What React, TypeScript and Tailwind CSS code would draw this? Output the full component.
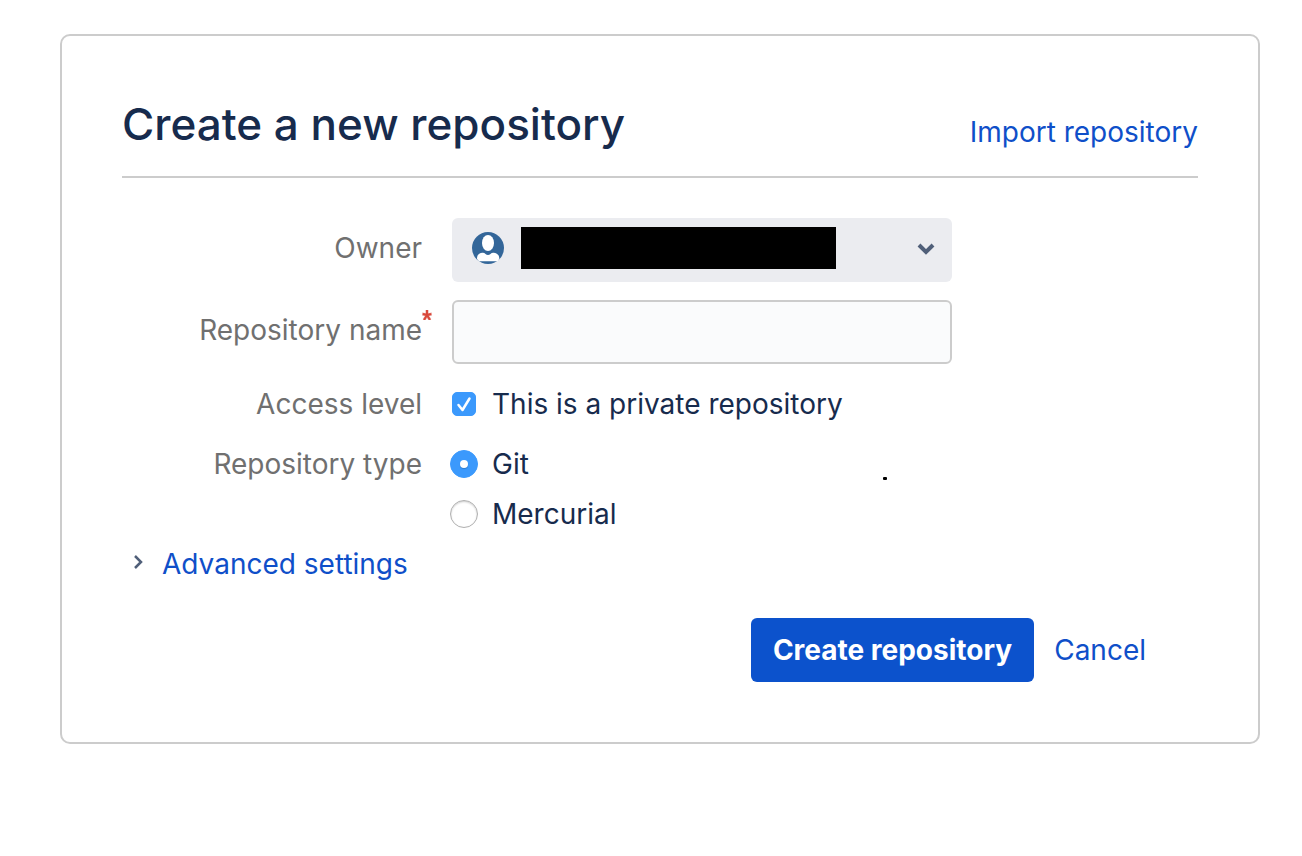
import React, { useState } from "react";

type RepositoryType = "git" | "hg";

const REPOSITORY_TYPES: { value: RepositoryType; label: string }[] = [
  { value: "git", label: "Git" },
  { value: "hg", label: "Mercurial" },
];

const rowClass = "grid grid-cols-[300px_minmax(0,500px)] gap-x-[30px]";
const labelClass = "text-right text-[#707070]";
const linkClass = "text-[#0f4fc9] hover:underline";

const OwnerSelect: React.FC = () => (
  <div className="relative h-16">
    <select
      id="owner"
      className="h-full w-full appearance-none rounded-md bg-[#ebecf0]"
    >
      <option value="me" aria-label="Current user" />
    </select>
    <div className="pointer-events-none absolute inset-0 flex items-center pr-4 pb-1 pl-5">
      <svg viewBox="0 0 32 32" className="h-8 w-8 shrink-0">
        <circle cx="16" cy="16" r="16" fill="#336699" />
        <ellipse cx="16" cy="11" rx="6" ry="8" fill="#fff" />
        <path
          d="M5 27C5 22.500 7 21 10.500 20.700C13 20.500 14 23 16 23C18 23 19 20.500 21.500 20.700C25 21 27.300 22.500 27.300 27L25.500 29.200H7Z"
          fill="#fff"
        />
      </svg>
      <div className="ml-[17px] h-[42px] w-[315px] bg-black" />
      <svg viewBox="0 0 20 20" className="ml-auto h-5 w-5 shrink-0">
        <path
          d="M3 7L10 14L17 7"
          fill="none"
          stroke="#505f79"
          strokeWidth="4"
        />
      </svg>
    </div>
  </div>
);

const App: React.FC = () => {
  const [name, setName] = useState("");
  const [isPrivate, setIsPrivate] = useState(true);
  const [type, setType] = useState<RepositoryType>("git");

  return (
    <main className="min-h-screen bg-white pt-[34px] pr-[42px] pb-10 pl-[60px] font-['Inter',sans-serif] text-[28px] leading-10 text-[#172b4d]">
      <form
        className="rounded-[10px] border-2 border-[#cccccc] p-[60px]"
        onSubmit={(e) => e.preventDefault()}
      >
        <header className="flex items-end justify-between border-b-2 border-[#cccccc] pb-6">
          <h1 className="text-[44px] leading-14 font-medium">
            Create a new repository
          </h1>
          <a href="#import" className={linkClass}>
            Import repository
          </a>
        </header>

        <div className="mt-10 flex flex-col">
          <div className={rowClass}>
            <label htmlFor="owner" className={`${labelClass} pt-[10px]`}>
              Owner
            </label>
            <OwnerSelect />
          </div>

          <div className={`${rowClass} mt-[18px]`}>
            <label
              htmlFor="name"
              className={`${labelClass} relative pt-[10px]`}
            >
              Repository name
              <svg
                viewBox="0 0 10 10"
                className="absolute top-[10px] left-full h-[10px] w-[10px]"
              >
                <path
                  d="M5 5V0M5 5L0 4M5 5L10 4M5 5L2 10M5 5L8 10"
                  stroke="#eba39c"
                  strokeWidth="3"
                />
                <path
                  d="M5 5V0M5 5L1 4M5 5L9 4M5 5L2 10M5 5L8 10"
                  stroke="#d9483b"
                  strokeWidth="2"
                />
              </svg>
            </label>
            <input
              id="name"
              type="text"
              required
              value={name}
              onChange={(e) => setName(e.target.value)}
              className="h-16 w-full rounded-md border-2 border-[#cccccc] bg-[#fafbfc] px-4"
            />
          </div>

          <div className={`${rowClass} mt-5`}>
            <span className={labelClass}>Access level</span>
            <label className="flex items-center">
              <span className="relative h-6 w-6 shrink-0">
                <input
                  type="checkbox"
                  checked={isPrivate}
                  onChange={(e) => setIsPrivate(e.target.checked)}
                  className="peer block h-6 w-6 appearance-none rounded-[5px] border border-[#b5b5b5] bg-white checked:border-[#3b99fc] checked:bg-[#3b99fc]"
                />
                <svg
                  viewBox="0 0 24 24"
                  className="pointer-events-none absolute inset-0 hidden peer-checked:block"
                >
                  <path
                    d="M6.500 13L10.500 18L17.500 6.500"
                    fill="none"
                    stroke="#fff"
                    strokeWidth="2.500"
                    strokeLinecap="round"
                    strokeLinejoin="round"
                  />
                </svg>
              </span>
              <span className="ml-4">This is a private repository</span>
            </label>
          </div>

          <div
            role="radiogroup"
            aria-labelledby="type-label"
            className={`${rowClass} mt-5`}
          >
            <span id="type-label" className={labelClass}>
              Repository type
            </span>
            <div className="flex flex-col gap-[10px]">
              {REPOSITORY_TYPES.map(({ value, label }) => (
                <div key={value} className="-ml-[2px] flex">
                  <label className="flex items-center">
                    <span className="relative h-7 w-7 shrink-0">
                      <input
                        type="radio"
                        name="type"
                        value={value}
                        checked={type === value}
                        onChange={() => setType(value)}
                        className="peer block h-7 w-7 appearance-none rounded-full border border-[#b0b0b0] bg-white shadow-[inset_0_1px_2px_#00000033] checked:border-[#3b99fc] checked:bg-[#3b99fc] checked:shadow-none"
                      />
                      <span className="pointer-events-none absolute inset-[10px] hidden rounded-full bg-white shadow-[0_1px_1px_#00000033] peer-checked:block" />
                    </span>
                    <span className="ml-[14px]">{label}</span>
                  </label>
                  {value === "git" && (
                    <span className="mr-[65px] mb-1 ml-auto h-[3px] w-1 self-end rounded-[1px] bg-black" />
                  )}
                </div>
              ))}
            </div>
          </div>

          <button
            type="button"
            className={`${linkClass} mt-[10px] flex items-center self-start pl-[10px]`}
          >
            <svg viewBox="0 0 12 16" className="mb-1 h-4 w-3">
              <path
                d="M3 2L9 8L3 14"
                fill="none"
                stroke="#505f79"
                strokeWidth="2.500"
              />
            </svg>
            <span className="ml-[18px]">Advanced settings</span>
          </button>
        </div>

        <div className="mt-[34px] flex items-center justify-end gap-5 pr-[52px]">
          <button
            type="submit"
            className="h-16 rounded-md bg-[#0c52cc] px-[22px] font-bold text-white"
          >
            Create repository
          </button>
          <a href="#cancel" className={linkClass}>
            Cancel
          </a>
        </div>
      </form>
    </main>
  );
};

export default App;
